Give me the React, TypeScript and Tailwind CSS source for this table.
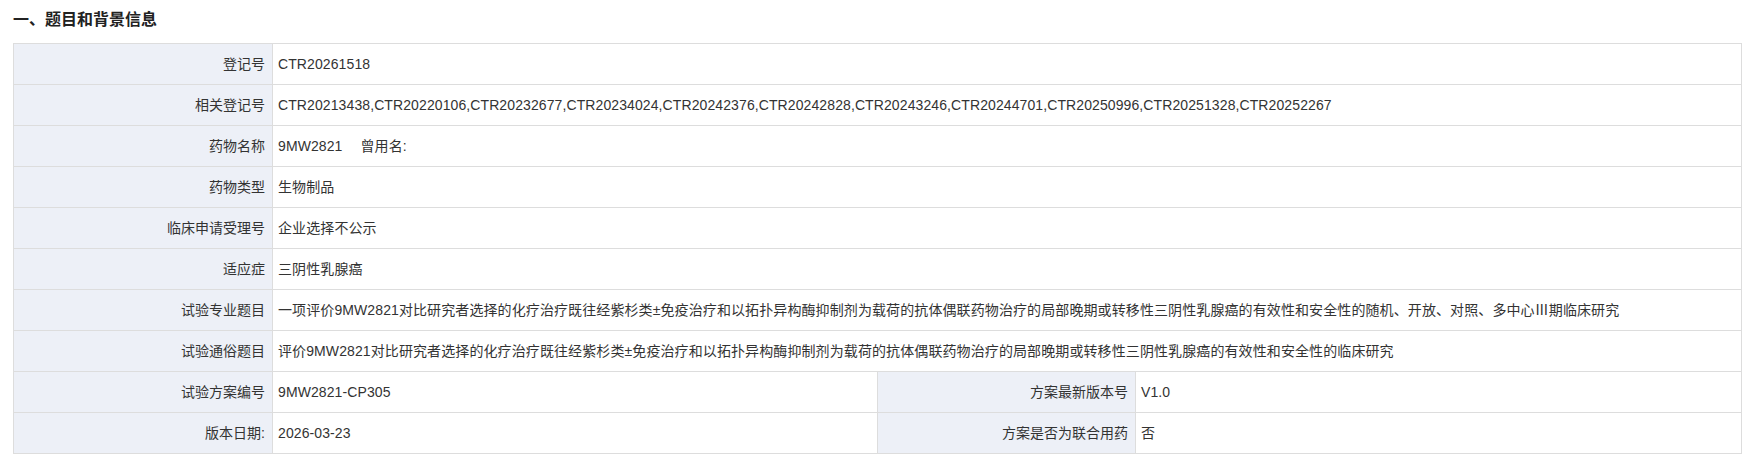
import React from "react";

const rows: { label: string; value: React.ReactNode }[] = [
  { label: "登记号", value: "CTR20261518" },
  {
    label: "相关登记号",
    value:
      "CTR20213438,CTR20220106,CTR20232677,CTR20234024,CTR20242376,CTR20242828,CTR20243246,CTR20244701,CTR20250996,CTR20251328,CTR20252267",
  },
  {
    label: "药物名称",
    value: (
      <>
        9MW2821<span className="ml-[18px]">曾用名:</span>
      </>
    ),
  },
  { label: "药物类型", value: "生物制品" },
  { label: "临床申请受理号", value: "企业选择不公示" },
  { label: "适应症", value: "三阴性乳腺癌" },
  {
    label: "试验专业题目",
    value:
      "一项评价9MW2821对比研究者选择的化疗治疗既往经紫杉类±免疫治疗和以拓扑异构酶抑制剂为载荷的抗体偶联药物治疗的局部晚期或转移性三阴性乳腺癌的有效性和安全性的随机、开放、对照、多中心Ⅲ期临床研究",
  },
  {
    label: "试验通俗题目",
    value:
      "评价9MW2821对比研究者选择的化疗治疗既往经紫杉类±免疫治疗和以拓扑异构酶抑制剂为载荷的抗体偶联药物治疗的局部晚期或转移性三阴性乳腺癌的有效性和安全性的临床研究",
  },
];

const pairs = [
  ["试验方案编号", "9MW2821-CP305", "方案最新版本号", "V1.0"],
  ["版本日期:", "2026-03-23", "方案是否为联合用药", "否"],
];

const labelCls =
  "h-[41px] border border-[#dddddd] bg-[#edf0f7] pr-[7px] text-right align-middle whitespace-nowrap";
const valueCls =
  "h-[41px] border border-[#dddddd] bg-white pl-[5px] text-left align-middle whitespace-nowrap tracking-[0.1px]";

export default function App() {
  return (
    <div
      className="min-h-screen bg-white text-[#333333] text-[14px]"
      style={{ fontFamily: '"Liberation Sans", "Noto Sans CJK SC", sans-serif' }}
    >
      <h2 className="pl-[13px] pt-[9px] pb-[12px] text-[16px] font-bold leading-[22px] text-[#222222]">
        一、题目和背景信息
      </h2>
      <table className="ml-[13px] w-[1728px] table-fixed border-collapse">
        <colgroup>
          <col className="w-[259px]" />
          <col className="w-[605px]" />
          <col className="w-[258px]" />
          <col className="w-[606px]" />
        </colgroup>
        <tbody>
          {rows.map((r) => (
            <tr key={r.label}>
              <td className={labelCls}>{r.label}</td>
              <td className={valueCls} colSpan={3}>
                {r.value}
              </td>
            </tr>
          ))}
          {pairs.map((p) => (
            <tr key={p[0]}>
              <td className={labelCls}>{p[0]}</td>
              <td className={valueCls}>{p[1]}</td>
              <td className={labelCls}>{p[2]}</td>
              <td className={valueCls}>{p[3]}</td>
            </tr>
          ))}
        </tbody>
      </table>
    </div>
  );
}
